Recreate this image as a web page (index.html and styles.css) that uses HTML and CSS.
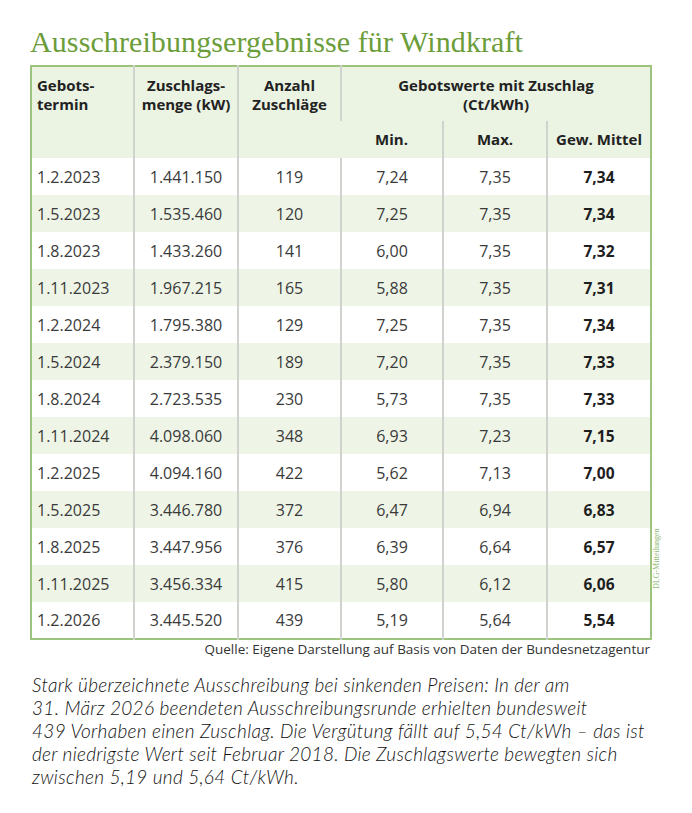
FILE: index.html
```html
<!DOCTYPE html>
<html lang="de">
<head>
<meta charset="utf-8">
<title>Ausschreibungsergebnisse für Windkraft</title>
<link rel="stylesheet" href="styles.css">
</head>
<body>
<div class="page">
  <h1 class="title">Ausschreibungsergebnisse für Windkraft</h1>
  <div class="table-wrap">
    <table class="data">
      <colgroup>
        <col class="c1"><col class="c2"><col class="c3"><col class="c4"><col class="c5"><col class="c6">
      </colgroup>
      <thead>
        <tr class="h1">
          <th rowspan="2" class="left">Gebots-<br>termin</th>
          <th rowspan="2">Zuschlags-<br>menge (kW)</th>
          <th rowspan="2">Anzahl<br>Zuschläge</th>
          <th colspan="3" class="group">Gebotswerte mit Zuschlag<br>(Ct/kWh)</th>
        </tr>
        <tr class="h2">
          <th class="sub first">Min.</th>
          <th class="sub">Max.</th>
          <th class="sub">Gew. Mittel</th>
        </tr>
      </thead>
      <tbody>
        <tr><td class="left">1.2.2023</td><td>1.441.150</td><td>119</td><td>7,24</td><td>7,35</td><td class="b">7,34</td></tr>
        <tr><td class="left">1.5.2023</td><td>1.535.460</td><td>120</td><td>7,25</td><td>7,35</td><td class="b">7,34</td></tr>
        <tr><td class="left">1.8.2023</td><td>1.433.260</td><td>141</td><td>6,00</td><td>7,35</td><td class="b">7,32</td></tr>
        <tr><td class="left">1.11.2023</td><td>1.967.215</td><td>165</td><td>5,88</td><td>7,35</td><td class="b">7,31</td></tr>
        <tr><td class="left">1.2.2024</td><td>1.795.380</td><td>129</td><td>7,25</td><td>7,35</td><td class="b">7,34</td></tr>
        <tr><td class="left">1.5.2024</td><td>2.379.150</td><td>189</td><td>7,20</td><td>7,35</td><td class="b">7,33</td></tr>
        <tr><td class="left">1.8.2024</td><td>2.723.535</td><td>230</td><td>5,73</td><td>7,35</td><td class="b">7,33</td></tr>
        <tr><td class="left">1.11.2024</td><td>4.098.060</td><td>348</td><td>6,93</td><td>7,23</td><td class="b">7,15</td></tr>
        <tr><td class="left">1.2.2025</td><td>4.094.160</td><td>422</td><td>5,62</td><td>7,13</td><td class="b">7,00</td></tr>
        <tr><td class="left">1.5.2025</td><td>3.446.780</td><td>372</td><td>6,47</td><td>6,94</td><td class="b">6,83</td></tr>
        <tr><td class="left">1.8.2025</td><td>3.447.956</td><td>376</td><td>6,39</td><td>6,64</td><td class="b">6,57</td></tr>
        <tr><td class="left">1.11.2025</td><td>3.456.334</td><td>415</td><td>5,80</td><td>6,12</td><td class="b">6,06</td></tr>
        <tr><td class="left">1.2.2026</td><td>3.445.520</td><td>439</td><td>5,19</td><td>5,64</td><td class="b">5,54</td></tr>
      </tbody>
    </table>
    <span class="credit">DLG-Mitteilungen</span>
  </div>
  <p class="source">Quelle: Eigene Darstellung auf Basis von Daten der Bundesnetzagentur</p>
  <p class="caption">Stark überzeichnete Ausschreibung bei sinkenden Preisen: In der am<br>31. März 2026 beendeten Ausschreibungsrunde erhielten bundesweit<br>439 Vorhaben einen Zuschlag. Die Vergütung fällt auf 5,54 Ct/kWh – das ist<br>der niedrigste Wert seit Februar 2018. Die Zuschlagswerte bewegten sich<br>zwischen 5,19 und 5,64 Ct/kWh.</p>
</div>
</body>
</html>
```
FILE: styles.css
```css
* { box-sizing: border-box; }
html, body { margin: 0; padding: 0; background: #fff; }
body { font-family: "Open Sans", "Liberation Sans", sans-serif; color: #333; }

.page { padding: 0 0 0 30px; width: 692px; }

.title {
  margin: 0;
  padding-top: 24px;
  height: 65px;
  font-family: "Liberation Serif", "DejaVu Serif", serif;
  font-weight: normal;
  font-size: 30px;
  line-height: 36px;
  color: #6b9d3a;
  letter-spacing: 0.1px;
}

.table-wrap { position: relative; width: 620px; }

.data {
  width: 620px;
  border-collapse: collapse;
  border: 2px solid #9dc47c;
  table-layout: fixed;
  font-size: 16px;
}
.c1 { width: 103px; }
.c2 { width: 104px; }
.c3 { width: 103px; }
.c4 { width: 102px; }
.c5 { width: 104px; }
.c6 { width: 104px; }

.data th {
  background: #ebf3e3;
  font-weight: bold;
  font-size: 15px;
  color: #222;
  text-align: center;
  vertical-align: top;
  line-height: 19px;
  padding: 0;
}
.data th + th { border-left: 2px solid #d0d3cd; }
.h1 th { height: 55px; padding-top: 9px; }
.h1 th.left { text-align: left; padding-left: 5px; }
.h2 th { height: 37px; vertical-align: middle; border-left: none; }
.h2 th.sub + th.sub { border-left: 2px solid #d0d3cd; }

.data td {
  height: 37px;
  padding: 0;
  text-align: center;
  vertical-align: middle;
  color: #3a3a3a;
  line-height: 22px;
}
.data td + td { border-left: 2px solid #d0d3cd; }
.data td.left { text-align: left; padding-left: 5px; }
.data td.b { font-weight: bold; color: #1e1e1e; font-size: 15.5px; }
.data tbody tr:nth-child(even) td { background: #eef5e7; }

.credit {
  position: absolute;
  left: 621px;
  top: 524px;
  height: 12px;
  transform-origin: 0 0;
  transform: rotate(-90deg);
  font-family: "Liberation Serif", "DejaVu Serif", serif;
  font-size: 8px;
  line-height: 12px;
  color: #8fb872;
  white-space: nowrap;
}

.source {
  margin: 0;
  width: 620px;
  text-align: right;
  font-size: 13.5px;
  line-height: 19px;
  color: #333;
}

.caption {
  margin: 14px 0 0 2px;
  font-family: Lato, "Open Sans", sans-serif;
  font-style: italic;
  font-size: 19px;
  line-height: 23px;
  letter-spacing: 0.3px;
  color: #111;
  font-weight: 300;
}
```
